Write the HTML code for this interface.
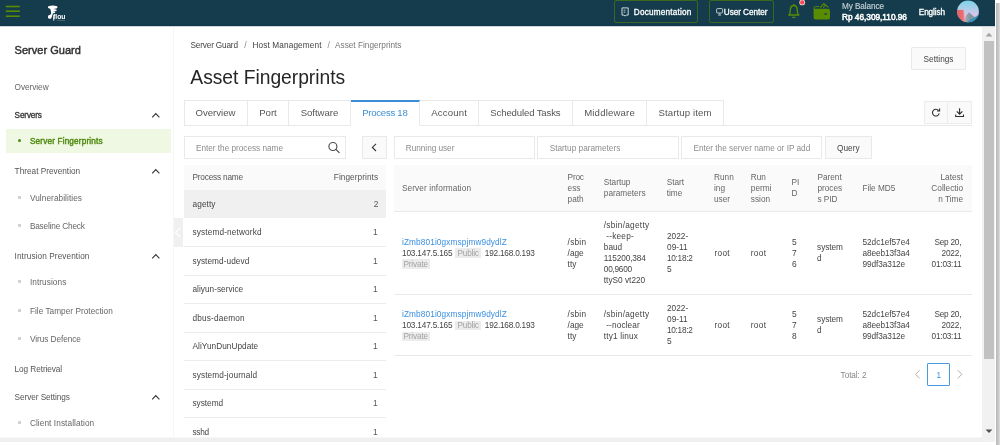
<!DOCTYPE html>
<html><head><meta charset="utf-8"><title>Asset Fingerprints</title>
<style>
*{box-sizing:border-box;margin:0;padding:0}
html,body{width:1000px;height:445px;overflow:hidden;background:#fff}
body{font-family:"Liberation Sans",sans-serif;font-size:8.2px;color:#333;position:relative;will-change:transform}
.a{position:absolute;white-space:nowrap}
#hdr{left:0;top:0;width:995px;height:27px;background:linear-gradient(#143c4c 0,#143c4c 24px,#113848 25px,#113848 26px);border-bottom:1px solid #cdd6d9}
.hbtn{top:0;height:23px;border:1px solid #3b6820;border-radius:2px}
.tab{top:100px;height:26px;border:1px solid #e9e9e9;border-left:none;background:#fff}
.inp{top:136px;height:23px;border:1px solid #e9e9e9;background:#fff}
.tag{background:#ececec;color:#999;padding:0 1.3px}
</style></head><body>
<div class="a" id="hdr"></div>
<svg class="a" style="left:0;top:0" width="995" height="27" viewBox="0 0 995 27">
<rect x="5.8" y="5.7" width="14" height="1.6" fill="#5a8c00"/><rect x="5.8" y="10.4" width="14" height="1.6" fill="#5a8c00"/><rect x="5.8" y="15.4" width="14" height="1.6" fill="#5a8c00"/>
<ellipse cx="52.7" cy="7.3" rx="4.8" ry="1.7" fill="#fff"/>
<ellipse cx="53.9" cy="10.3" rx="3" ry="1.1" fill="#fff"/>
<ellipse cx="53.2" cy="12.3" rx="2.1" ry="0.9" fill="#fff"/>
<path d="M50 8 C50.4 10 51.4 11.6 51.2 13.2 C51 14.6 49.6 15 48.6 15.8 L51.2 17.4 C52.2 16.4 52.6 14.6 53 12.8 L54.6 8.4 Z" fill="#fff"/>
<circle cx="49.8" cy="16.9" r="1.9" fill="#fff"/>
<rect x="53.3" y="16" width="1" height="4.6" fill="#fff"/>
<text x="53" y="19" font-family="Liberation Sans, sans-serif" font-weight="bold" font-size="6.6" fill="#fff" textLength="12.4" lengthAdjust="spacingAndGlyphs">flou</text>
<rect x="57" y="19.9" width="8" height="0.8" fill="#54737f"/>
<path d="M622 7.9 H628.2 V15.1 H626.3 L625.1 16 L623.9 15.1 H622 Z" fill="none" stroke="#e4eaec" stroke-width="0.9" stroke-linejoin="round"/>
<path d="M623.6 10.2 H625.4 M623.6 12.2 H625.4" stroke="#e4eaec" stroke-width="0.8"/>
<rect x="716.6" y="8.6" width="6" height="4.4" rx="0.9" fill="none" stroke="#e4eaec" stroke-width="0.8"/>
<path d="M718.5 15.3 L719.6 13.4 L720.7 15.3Z" fill="none" stroke="#e4eaec" stroke-width="0.6"/>
<g fill="none" stroke="#5a8c00">
<path d="M793.8 5.5 C790.6 5.5 790.4 8.2 790.4 9.8 C790.4 12.6 790.2 13.8 788.8 15 H798.8 C797.4 13.8 797.2 12.6 797.2 9.8 C797.2 8.2 797 5.5 793.8 5.5 Z" stroke-width="1.4" stroke-linejoin="round"/>
<path d="M793.8 5.4 V4.4" stroke-width="1.3" stroke-linecap="round"/>
<path d="M792.8 17.4 H794.8" stroke-width="1.4" stroke-linecap="round"/>
<path d="M820.2 7.6 L823.8 3.7 L828.4 7.4" stroke-width="1.2" stroke-linejoin="round"/>
<path d="M823.2 7.6 L825.6 5" stroke-width="1.1"/>
<path d="M819 6.6 H815.4 Q814.1 6.6 814.1 8 V9.4" stroke-width="1"/>
</g>
<path d="M813.6 8.7 H828 Q830 8.7 830 10.7 V17.6 Q830 19.6 828 19.6 H815.6 Q813.6 19.6 813.6 17.6 Z" fill="#5a8c00"/>
<rect x="824.3" y="13.2" width="2.8" height="1.6" rx="0.3" fill="#1d4a45"/>
<circle cx="802.2" cy="2.4" r="2.9" fill="#e9d3d8"/><circle cx="802.2" cy="2.4" r="2.1" fill="#ff4655"/>
</svg>
<div class="a hbtn" style="left:614px;width:84px"></div>
<div class="a" style="left:633.8px;top:9px;font-size:8.2px;line-height:1;color:#fff;-webkit-text-stroke:0.3px #fff;letter-spacing:0.204px;">Documentation</div>
<div class="a hbtn" style="left:709px;width:65px"></div>
<div class="a" style="left:723.8px;top:9px;font-size:8.2px;line-height:1;color:#fff;-webkit-text-stroke:0.3px #fff;letter-spacing:-0.050px;">User Center</div>
<div class="a" style="left:842px;top:3px;font-size:8.2px;line-height:1;color:#c4d0d6;-webkit-text-stroke:0.15px #c4d0d6;letter-spacing:-0.094px;">My Balance</div>
<div class="a" style="left:842px;top:13px;font-size:8.3px;line-height:1;color:#fff;-webkit-text-stroke:0.5px #fff;letter-spacing:-0.025px;">Rp 46,309,110.96</div>
<div class="a" style="left:918.8px;top:9px;font-size:8.2px;line-height:1;color:#fff;-webkit-text-stroke:0.3px #fff;letter-spacing:-0.116px;">English</div>
<svg class="a" style="left:956px;top:0px" width="24" height="24" viewBox="956 0 24 24"><defs><clipPath id="av"><circle cx="968" cy="11.4" r="10.9"/></clipPath><linearGradient id="sky" x1="0" y1="0" x2="0" y2="1"><stop offset="0" stop-color="#78d4ea"/><stop offset="0.4" stop-color="#b3cdea"/><stop offset="0.75" stop-color="#eec0e8"/><stop offset="1" stop-color="#e6bfe2"/></linearGradient>
<linearGradient id="clf" x1="0" y1="0" x2="1" y2="0"><stop offset="0" stop-color="#e05a62"/><stop offset="0.7" stop-color="#ea6e72"/><stop offset="1" stop-color="#f49a98"/></linearGradient>
<linearGradient id="mtn" x1="0" y1="0" x2="1" y2="0"><stop offset="0" stop-color="#9fb0ba"/><stop offset="0.5" stop-color="#7f929e"/><stop offset="1" stop-color="#93a5b0"/></linearGradient></defs>
<g clip-path="url(#av)"><rect x="956" y="0" width="24" height="24" fill="url(#sky)"/>
<path d="M964.4 23 L965.8 16 L969 12.2 L971.4 14.6 L974.2 16.4 L977 23Z" fill="url(#mtn)"/>
<path d="M956 10 L963.4 9.7 L964.2 13 L965.2 23 L956 23Z" fill="url(#clf)"/>
<path d="M965.6 23 L979.5 14.2 L980 23Z" fill="#2d93b8"/></g></svg>
<div class="a" style="left:173px;top:27px;width:1px;height:410px;background:#f6f6f6"></div>
<div class="a" style="left:14.6px;top:45px;font-size:11px;line-height:1;color:#333;-webkit-text-stroke:0.45px #333;letter-spacing:0.025px;">Server Guard</div>
<div class="a" style="left:14.6px;top:84px;font-size:8.25px;line-height:1;color:#666;letter-spacing:-0.055px;">Overview</div>
<div class="a" style="left:14.6px;top:112px;font-size:8.2px;line-height:1;color:#333;-webkit-text-stroke:0.3px #333;letter-spacing:-0.142px;">Servers</div>
<svg class="a" style="left:150px;top:110.8px" width="12" height="9" viewBox="0 0 12 9"><path d="M2.2 6.3 L5.8 2.6 L9.4 6.3" fill="none" stroke="#333" stroke-width="1.1"/></svg>
<div class="a" style="left:6px;top:129px;width:165px;height:24px;background:#eff8e2"></div>
<div class="a" style="left:18.3px;top:139.4px;width:3px;height:3px;border-radius:50%;background:#4f8a10"></div>
<div class="a" style="left:29.9px;top:138px;font-size:8.2px;line-height:1;color:#4f8a10;-webkit-text-stroke:0.4px #4f8a10;letter-spacing:0.171px;">Server Fingerprints</div>
<div class="a" style="left:14.6px;top:168px;font-size:8.25px;line-height:1;color:#555;">Threat Prevention</div>
<svg class="a" style="left:150px;top:167.2px" width="12" height="9" viewBox="0 0 12 9"><path d="M2.2 6.3 L5.8 2.6 L9.4 6.3" fill="none" stroke="#333" stroke-width="1.1"/></svg>
<div class="a" style="left:18px;top:196px;width:3px;height:3px;background:#d2d2d2"></div>
<div class="a" style="left:29.9px;top:195px;font-size:8.25px;line-height:1;color:#666;letter-spacing:0.075px;">Vulnerabilities</div>
<div class="a" style="left:18px;top:224px;width:3px;height:3px;background:#d2d2d2"></div>
<div class="a" style="left:29.9px;top:223px;font-size:8.25px;line-height:1;color:#666;letter-spacing:-0.179px;">Baseline Check</div>
<div class="a" style="left:14.6px;top:253px;font-size:8.25px;line-height:1;color:#555;letter-spacing:0.075px;">Intrusion Prevention</div>
<svg class="a" style="left:150px;top:251.7px" width="12" height="9" viewBox="0 0 12 9"><path d="M2.2 6.3 L5.8 2.6 L9.4 6.3" fill="none" stroke="#333" stroke-width="1.1"/></svg>
<div class="a" style="left:18px;top:280px;width:3px;height:3px;background:#d2d2d2"></div>
<div class="a" style="left:29.9px;top:279px;font-size:8.25px;line-height:1;color:#666;letter-spacing:0.070px;">Intrusions</div>
<div class="a" style="left:18px;top:309px;width:3px;height:3px;background:#d2d2d2"></div>
<div class="a" style="left:29.9px;top:308px;font-size:8.25px;line-height:1;color:#666;letter-spacing:0.025px;">File Tamper Protection</div>
<div class="a" style="left:18px;top:337px;width:3px;height:3px;background:#d2d2d2"></div>
<div class="a" style="left:29.9px;top:336px;font-size:8.25px;line-height:1;color:#666;letter-spacing:-0.056px;">Virus Defence</div>
<div class="a" style="left:14.6px;top:366px;font-size:8.25px;line-height:1;color:#555;letter-spacing:-0.084px;">Log Retrieval</div>
<div class="a" style="left:14.6px;top:394px;font-size:8.25px;line-height:1;color:#555;letter-spacing:-0.079px;">Server Settings</div>
<svg class="a" style="left:150px;top:392.9px" width="12" height="9" viewBox="0 0 12 9"><path d="M2.2 6.3 L5.8 2.6 L9.4 6.3" fill="none" stroke="#333" stroke-width="1.1"/></svg>
<div class="a" style="left:18px;top:421px;width:3px;height:3px;background:#d2d2d2"></div>
<div class="a" style="left:29.9px;top:420px;font-size:8.25px;line-height:1;color:#666;letter-spacing:0.082px;">Client Installation</div>
<div class="a" style="left:190.5px;top:42px;font-size:8.25px;line-height:1;color:#444;letter-spacing:-0.184px;">Server Guard</div>
<div class="a" style="left:244.2px;top:41px;font-size:8.6px;line-height:1;color:#8a8a8a;">/</div>
<div class="a" style="left:252.5px;top:42px;font-size:8.25px;line-height:1;color:#444;letter-spacing:0.114px;">Host Management</div>
<div class="a" style="left:327.6px;top:41px;font-size:8.6px;line-height:1;color:#8a8a8a;">/</div>
<div class="a" style="left:335px;top:42px;font-size:8.25px;line-height:1;color:#777;">Asset Fingerprints</div>
<div class="a" style="left:190.3px;top:68px;font-size:19.3px;line-height:1;color:#262626;letter-spacing:-0.031px;">Asset Fingerprints</div>
<div class="a" style="left:911px;top:47px;width:55px;height:23px;border:1px solid #e9e9e9;border-radius:1px;background:#fafafa"></div>
<div class="a" style="left:923.5px;top:56px;font-size:8.25px;line-height:1;color:#444;letter-spacing:0.027px;">Settings</div>
<div class="a" style="left:184px;top:125px;width:788px;height:1px;background:#e9e9e9"></div>
<div class="a tab" style="left:184px;width:64px;border-left:1px solid #e9e9e9;"></div>
<div class="a" style="left:195.5px;top:108px;font-size:9.6px;line-height:1;color:#555;">Overview</div>
<div class="a tab" style="left:248px;width:41px;"></div>
<div class="a" style="left:259.25px;top:108px;font-size:9.6px;line-height:1;color:#555;letter-spacing:-0.036px;">Port</div>
<div class="a tab" style="left:289px;width:62px;"></div>
<div class="a" style="left:300.75px;top:108px;font-size:9.6px;line-height:1;color:#555;letter-spacing:-0.055px;">Software</div>
<div class="a tab" style="left:351px;width:69px;border-top:2px solid #3c8fd6;border-bottom-color:#fff;"></div>
<div class="a" style="left:362.25px;top:108px;font-size:9.6px;line-height:1;color:#3c8fd6;letter-spacing:-0.280px;">Process 18</div>
<div class="a tab" style="left:420px;width:59px;"></div>
<div class="a" style="left:431.15px;top:108px;font-size:9.6px;line-height:1;color:#555;letter-spacing:0.169px;">Account</div>
<div class="a tab" style="left:479px;width:94px;"></div>
<div class="a" style="left:490.3px;top:108px;font-size:9.6px;line-height:1;color:#555;letter-spacing:-0.143px;">Scheduled Tasks</div>
<div class="a tab" style="left:573px;width:74px;"></div>
<div class="a" style="left:584.15px;top:108px;font-size:9.6px;line-height:1;color:#555;letter-spacing:0.179px;">Middleware</div>
<div class="a tab" style="left:647px;width:77px;"></div>
<div class="a" style="left:658.45px;top:108px;font-size:9.6px;line-height:1;color:#555;letter-spacing:0.122px;">Startup item</div>
<div class="a" style="left:924px;top:101px;width:48px;height:23px;border:1px solid #ececec;background:#fafafa"></div>
<div class="a" style="left:947px;top:101px;width:1px;height:23px;background:#ececec"></div>
<svg class="a" style="left:924px;top:101px" width="48" height="23" viewBox="924 101 48 23"><g fill="none" stroke="#2e2e2e" stroke-width="1.1">
<path d="M938.6 110.6 A3.4 3.4 0 1 0 939.2 113.4"/><path d="M939.6 108.4 V111 H937"/>
<path d="M959.6 108.2 V114 M956.8 111.4 L959.6 114.2 L962.4 111.4 M955.7 114.4 V116.5 H963.5 V114.4"/></g></svg>
<div class="a inp" style="left:184px;width:162px"></div>
<div class="a" style="left:196px;top:145px;font-size:8.25px;line-height:1;color:#8c8c8c;letter-spacing:-0.028px;">Enter the process name</div>
<svg class="a" style="left:327px;top:141px" width="14" height="13" viewBox="0 0 14 13"><circle cx="5.9" cy="5.5" r="4" fill="none" stroke="#4a4a4a" stroke-width="1.15"/><path d="M8.8 8.4 L12.5 11.9" stroke="#4a4a4a" stroke-width="1.3"/></svg>
<div class="a" style="left:362px;top:136px;width:25px;height:23px;border:1px solid #e9e9e9;background:#fafafa"></div>
<svg class="a" style="left:370px;top:143px" width="8" height="9" viewBox="0 0 8 9"><path d="M6 0.8 L2.4 4.4 L6 8" fill="none" stroke="#333" stroke-width="1.1"/></svg>
<div class="a inp" style="left:394px;width:141px"></div>
<div class="a" style="left:405.8px;top:145px;font-size:8.25px;line-height:1;color:#8c8c8c;letter-spacing:-0.043px;">Running user</div>
<div class="a inp" style="left:537px;width:142px"></div>
<div class="a" style="left:549.7px;top:145px;font-size:8.25px;line-height:1;color:#8c8c8c;">Startup parameters</div>
<div class="a inp" style="left:681px;width:141px"></div>
<div class="a" style="left:693.4px;top:145px;font-size:8.25px;line-height:1;color:#8c8c8c;letter-spacing:-0.012px;">Enter the server name or IP add</div>
<div class="a" style="left:825px;top:136px;width:47px;height:23px;border:1px solid #e9e9e9;background:#fafafa"></div>
<div class="a" style="left:837.1px;top:145px;font-size:8.25px;line-height:1;color:#444;">Query</div>
<div class="a" style="left:184px;top:165px;width:202px;height:24.5px;background:#fafafa"></div>
<div class="a" style="left:192.5px;top:174px;font-size:8.25px;line-height:1;color:#555;letter-spacing:-0.194px;">Process name</div>
<div class="a" style="right:621.83px;top:174px;font-size:8.25px;line-height:1;color:#555;letter-spacing:0.067px;">Fingerprints</div>
<div class="a" style="left:184px;top:189.5px;width:202px;height:28.5px;background:#f0f0f0"></div>
<div class="a" style="left:192.5px;top:201px;font-size:8.25px;line-height:1;color:#444;letter-spacing:0.105px;">agetty</div>
<div class="a" style="right:621.7px;top:200px;font-size:8.4px;line-height:1;color:#555;">2</div>
<div class="a" style="left:192.5px;top:229px;font-size:8.25px;line-height:1;color:#444;letter-spacing:0.137px;">systemd-networkd</div>
<div class="a" style="right:622.4px;top:228px;font-size:8.4px;line-height:1;color:#555;">1</div>
<div class="a" style="left:184px;top:246.0px;width:202px;height:1px;background:#ececec"></div>
<div class="a" style="left:192.5px;top:258px;font-size:8.25px;line-height:1;color:#444;letter-spacing:0.072px;">systemd-udevd</div>
<div class="a" style="right:622.4px;top:257px;font-size:8.4px;line-height:1;color:#555;">1</div>
<div class="a" style="left:184px;top:274.5px;width:202px;height:1px;background:#ececec"></div>
<div class="a" style="left:192.5px;top:286px;font-size:8.25px;line-height:1;color:#444;letter-spacing:0.013px;">aliyun-service</div>
<div class="a" style="right:622.4px;top:285px;font-size:8.4px;line-height:1;color:#555;">1</div>
<div class="a" style="left:184px;top:303.0px;width:202px;height:1px;background:#ececec"></div>
<div class="a" style="left:192.5px;top:315px;font-size:8.25px;line-height:1;color:#444;letter-spacing:0.175px;">dbus-daemon</div>
<div class="a" style="right:622.4px;top:314px;font-size:8.4px;line-height:1;color:#555;">1</div>
<div class="a" style="left:184px;top:331.5px;width:202px;height:1px;background:#ececec"></div>
<div class="a" style="left:192.5px;top:343px;font-size:8.25px;line-height:1;color:#444;letter-spacing:0.041px;">AliYunDunUpdate</div>
<div class="a" style="right:622.4px;top:342px;font-size:8.4px;line-height:1;color:#555;">1</div>
<div class="a" style="left:184px;top:360.0px;width:202px;height:1px;background:#ececec"></div>
<div class="a" style="left:192.5px;top:372px;font-size:8.25px;line-height:1;color:#444;letter-spacing:0.112px;">systemd-journald</div>
<div class="a" style="right:622.4px;top:371px;font-size:8.4px;line-height:1;color:#555;">1</div>
<div class="a" style="left:184px;top:388.5px;width:202px;height:1px;background:#ececec"></div>
<div class="a" style="left:192.5px;top:400px;font-size:8.25px;line-height:1;color:#444;letter-spacing:-0.020px;">systemd</div>
<div class="a" style="right:622.4px;top:399px;font-size:8.4px;line-height:1;color:#555;">1</div>
<div class="a" style="left:184px;top:417.0px;width:202px;height:1px;background:#ececec"></div>
<div class="a" style="left:192.5px;top:429px;font-size:8.25px;line-height:1;color:#444;letter-spacing:-0.309px;">sshd</div>
<div class="a" style="right:622.4px;top:428px;font-size:8.4px;line-height:1;color:#555;">1</div>
<div class="a" style="left:173.5px;top:217.5px;width:9px;height:29.5px;background:#f0f0f0"></div>
<svg class="a" style="left:174px;top:227px" width="8" height="11" viewBox="0 0 8 11"><path d="M6.2 0.8 L1.4 5.4 L6.2 10" fill="none" stroke="#fff" stroke-width="1.1"/></svg>
<div class="a" style="left:394px;top:165px;width:578px;height:47px;background:#fafafa;border-bottom:1px solid #e9e9e9"></div>
<div class="a" style="left:402px;top:185px;font-size:8.25px;line-height:1;color:#666;letter-spacing:0.094px;">Server information</div>
<div class="a" style="left:567.6px;top:174px;font-size:8.25px;line-height:1;color:#666;letter-spacing:-0.221px;">Proc</div>
<div class="a" style="left:567.6px;top:185px;font-size:8.25px;line-height:1;color:#666;">ess</div>
<div class="a" style="left:567.6px;top:196px;font-size:8.25px;line-height:1;color:#666;">path</div>
<div class="a" style="left:603.8px;top:179px;font-size:8.25px;line-height:1;color:#666;">Startup</div>
<div class="a" style="left:603.8px;top:190px;font-size:8.25px;line-height:1;color:#666;">parameters</div>
<div class="a" style="left:666.7px;top:179px;font-size:8.25px;line-height:1;color:#666;">Start</div>
<div class="a" style="left:666.7px;top:190px;font-size:8.25px;line-height:1;color:#666;">time</div>
<div class="a" style="left:714px;top:174px;font-size:8.25px;line-height:1;color:#666;">Runn</div>
<div class="a" style="left:714px;top:185px;font-size:8.25px;line-height:1;color:#666;">ing</div>
<div class="a" style="left:714px;top:196px;font-size:8.25px;line-height:1;color:#666;">user</div>
<div class="a" style="left:750.8px;top:174px;font-size:8.25px;line-height:1;color:#666;">Run</div>
<div class="a" style="left:750.8px;top:185px;font-size:8.25px;line-height:1;color:#666;">permi</div>
<div class="a" style="left:750.8px;top:196px;font-size:8.25px;line-height:1;color:#666;">ssion</div>
<div class="a" style="left:791.6px;top:179px;font-size:8.25px;line-height:1;color:#666;">PI</div>
<div class="a" style="left:791.6px;top:190px;font-size:8.25px;line-height:1;color:#666;">D</div>
<div class="a" style="left:817.4px;top:174px;font-size:8.25px;line-height:1;color:#666;">Parent</div>
<div class="a" style="left:817.4px;top:185px;font-size:8.25px;line-height:1;color:#666;">proces</div>
<div class="a" style="left:817.4px;top:196px;font-size:8.25px;line-height:1;color:#666;">s PID</div>
<div class="a" style="left:862.4px;top:185px;font-size:8.25px;line-height:1;color:#666;">File MD5</div>
<div class="a" style="right:37px;top:174px;font-size:8.25px;line-height:1;color:#666;">Latest</div>
<div class="a" style="right:37px;top:185px;font-size:8.25px;line-height:1;color:#666;">Collectio</div>
<div class="a" style="right:37px;top:196px;font-size:8.25px;line-height:1;color:#666;">n Time</div>
<div class="a" style="left:402px;top:239px;font-size:8.25px;line-height:1;color:#3a8fe0;letter-spacing:0.116px;">iZmb801i0gxmspjmw9dydlZ</div>
<div class="a" style="left:402px;top:250px;font-size:8.25px;line-height:1;color:#444;letter-spacing:-0.180px;">103.147.5.165</div>
<div class="a" style="left:455.4px;top:248.39999999999998px;width:25.4px;height:9.6px;background:#ececec"></div>
<div class="a" style="left:457.4px;top:250px;font-size:8.25px;line-height:1;color:#a3a3a3;letter-spacing:-0.174px;">Public</div>
<div class="a" style="left:484.8px;top:250px;font-size:8.25px;line-height:1;color:#444;letter-spacing:-0.222px;">192.168.0.193</div>
<div class="a" style="left:402px;top:259.45px;width:27.6px;height:9.6px;background:#ececec"></div>
<div class="a" style="left:403.4px;top:261px;font-size:8.25px;line-height:1;color:#a3a3a3;letter-spacing:-0.146px;">Private</div>
<div class="a" style="left:567.6px;top:239px;font-size:8.25px;line-height:1;color:#444;letter-spacing:0.243px;">/sbin</div>
<div class="a" style="left:567.6px;top:250px;font-size:8.25px;line-height:1;color:#444;">/age</div>
<div class="a" style="left:567.6px;top:261px;font-size:8.25px;line-height:1;color:#444;">tty</div>
<div class="a" style="left:603.8px;top:222px;font-size:8.25px;line-height:1;color:#444;letter-spacing:0.282px;">/sbin/agetty</div>
<div class="a" style="left:603.8px;top:233px;font-size:8.25px;line-height:1;color:#444;letter-spacing:0.211px;">&nbsp;--keep-</div>
<div class="a" style="left:603.8px;top:244px;font-size:8.25px;line-height:1;color:#444;letter-spacing:0.015px;">baud</div>
<div class="a" style="left:603.8px;top:255px;font-size:8.25px;line-height:1;color:#444;letter-spacing:-0.097px;">115200,384</div>
<div class="a" style="left:603.8px;top:266px;font-size:8.25px;line-height:1;color:#444;letter-spacing:-0.254px;">00,9600</div>
<div class="a" style="left:603.8px;top:277px;font-size:8.25px;line-height:1;color:#444;letter-spacing:0.013px;">ttyS0 vt220</div>
<div class="a" style="left:667px;top:233px;font-size:8.25px;line-height:1;color:#444;letter-spacing:0.025px;">2022-</div>
<div class="a" style="left:667px;top:244px;font-size:8.25px;line-height:1;color:#444;letter-spacing:0.053px;">09-11</div>
<div class="a" style="left:667px;top:255px;font-size:8.25px;line-height:1;color:#444;letter-spacing:-0.288px;">10:18:2</div>
<div class="a" style="left:667px;top:265px;font-size:8.4px;line-height:1;color:#444;">5</div>
<div class="a" style="left:714.4px;top:250px;font-size:8.25px;line-height:1;color:#444;letter-spacing:0.328px;">root</div>
<div class="a" style="left:750.8px;top:250px;font-size:8.25px;line-height:1;color:#444;letter-spacing:0.328px;">root</div>
<div class="a" style="left:791.9px;top:238px;font-size:8.4px;line-height:1;color:#444;">5</div>
<div class="a" style="left:791.9px;top:249px;font-size:8.4px;line-height:1;color:#444;">7</div>
<div class="a" style="left:791.9px;top:260px;font-size:8.4px;line-height:1;color:#444;">6</div>
<div class="a" style="left:817.1px;top:244px;font-size:8.25px;line-height:1;color:#444;letter-spacing:-0.066px;">system</div>
<div class="a" style="left:817.1px;top:255px;font-size:8.25px;line-height:1;color:#444;">d</div>
<div class="a" style="left:862.5px;top:239px;font-size:8.25px;line-height:1;color:#444;letter-spacing:-0.041px;">52dc1ef57e4</div>
<div class="a" style="left:862.5px;top:250px;font-size:8.25px;line-height:1;color:#444;letter-spacing:-0.087px;">a8eeb13f3a4</div>
<div class="a" style="left:862.5px;top:261px;font-size:8.25px;line-height:1;color:#444;letter-spacing:-0.099px;">99df3a312e</div>
<div class="a" style="right:38.72px;top:239px;font-size:8.25px;line-height:1;color:#444;letter-spacing:-0.223px;">Sep 20,</div>
<div class="a" style="right:38.66px;top:250px;font-size:8.25px;line-height:1;color:#444;letter-spacing:-0.161px;">2022,</div>
<div class="a" style="right:38.73px;top:261px;font-size:8.25px;line-height:1;color:#444;letter-spacing:-0.229px;">01:03:11</div>
<div class="a" style="left:394px;top:294px;width:578px;height:1px;background:#e9e9e9"></div>
<div class="a" style="left:402px;top:311px;font-size:8.25px;line-height:1;color:#3a8fe0;letter-spacing:0.116px;">iZmb801i0gxmspjmw9dydlZ</div>
<div class="a" style="left:402px;top:322px;font-size:8.25px;line-height:1;color:#444;letter-spacing:-0.180px;">103.147.5.165</div>
<div class="a" style="left:455.4px;top:320.5px;width:25.4px;height:9.6px;background:#ececec"></div>
<div class="a" style="left:457.4px;top:322px;font-size:8.25px;line-height:1;color:#a3a3a3;letter-spacing:-0.174px;">Public</div>
<div class="a" style="left:484.8px;top:322px;font-size:8.25px;line-height:1;color:#444;letter-spacing:-0.222px;">192.168.0.193</div>
<div class="a" style="left:402px;top:331.55px;width:27.6px;height:9.6px;background:#ececec"></div>
<div class="a" style="left:403.4px;top:333px;font-size:8.25px;line-height:1;color:#a3a3a3;letter-spacing:-0.146px;">Private</div>
<div class="a" style="left:567.6px;top:311px;font-size:8.25px;line-height:1;color:#444;letter-spacing:0.243px;">/sbin</div>
<div class="a" style="left:567.6px;top:322px;font-size:8.25px;line-height:1;color:#444;">/age</div>
<div class="a" style="left:567.6px;top:333px;font-size:8.25px;line-height:1;color:#444;">tty</div>
<div class="a" style="left:603.8px;top:311px;font-size:8.25px;line-height:1;color:#444;letter-spacing:0.282px;">/sbin/agetty</div>
<div class="a" style="left:603.8px;top:322px;font-size:8.25px;line-height:1;color:#444;letter-spacing:0.128px;">&nbsp;--noclear</div>
<div class="a" style="left:603.8px;top:333px;font-size:8.25px;line-height:1;color:#444;letter-spacing:0.160px;">tty1 linux</div>
<div class="a" style="left:667px;top:305px;font-size:8.25px;line-height:1;color:#444;letter-spacing:0.025px;">2022-</div>
<div class="a" style="left:667px;top:316px;font-size:8.25px;line-height:1;color:#444;letter-spacing:0.053px;">09-11</div>
<div class="a" style="left:667px;top:327px;font-size:8.25px;line-height:1;color:#444;letter-spacing:-0.288px;">10:18:2</div>
<div class="a" style="left:667px;top:337px;font-size:8.4px;line-height:1;color:#444;">5</div>
<div class="a" style="left:714.4px;top:322px;font-size:8.25px;line-height:1;color:#444;letter-spacing:0.328px;">root</div>
<div class="a" style="left:750.8px;top:322px;font-size:8.25px;line-height:1;color:#444;letter-spacing:0.328px;">root</div>
<div class="a" style="left:791.9px;top:310px;font-size:8.4px;line-height:1;color:#444;">5</div>
<div class="a" style="left:791.9px;top:321px;font-size:8.4px;line-height:1;color:#444;">7</div>
<div class="a" style="left:791.9px;top:332px;font-size:8.4px;line-height:1;color:#444;">8</div>
<div class="a" style="left:817.1px;top:316px;font-size:8.25px;line-height:1;color:#444;letter-spacing:-0.066px;">system</div>
<div class="a" style="left:817.1px;top:327px;font-size:8.25px;line-height:1;color:#444;">d</div>
<div class="a" style="left:862.5px;top:311px;font-size:8.25px;line-height:1;color:#444;letter-spacing:-0.041px;">52dc1ef57e4</div>
<div class="a" style="left:862.5px;top:322px;font-size:8.25px;line-height:1;color:#444;letter-spacing:-0.087px;">a8eeb13f3a4</div>
<div class="a" style="left:862.5px;top:333px;font-size:8.25px;line-height:1;color:#444;letter-spacing:-0.099px;">99df3a312e</div>
<div class="a" style="right:38.72px;top:311px;font-size:8.25px;line-height:1;color:#444;letter-spacing:-0.223px;">Sep 20,</div>
<div class="a" style="right:38.66px;top:322px;font-size:8.25px;line-height:1;color:#444;letter-spacing:-0.161px;">2022,</div>
<div class="a" style="right:38.73px;top:333px;font-size:8.25px;line-height:1;color:#444;letter-spacing:-0.229px;">01:03:11</div>
<div class="a" style="left:394px;top:355px;width:578px;height:1px;background:#e9e9e9"></div>
<div class="a" style="left:840.6px;top:372px;font-size:8.25px;line-height:1;color:#888;letter-spacing:-0.086px;">Total: 2</div>
<svg class="a" style="left:913px;top:369px" width="9" height="11" viewBox="0 0 9 11"><path d="M6.6 1.2 L2.6 5.3 L6.6 9.4" fill="none" stroke="#b0b0b0" stroke-width="1"/></svg>
<div class="a" style="left:927px;top:363px;width:23px;height:23px;border:1px solid #4a9ae0;border-radius:1px"></div>
<div class="a" style="left:936.4px;top:372px;font-size:8.2px;line-height:1;color:#3c8fd6;">1</div>
<svg class="a" style="left:955px;top:369px" width="9" height="11" viewBox="0 0 9 11"><path d="M2.8 1.2 L6.8 5.3 L2.8 9.4" fill="none" stroke="#b0b0b0" stroke-width="1"/></svg>
<div class="a" style="left:982px;top:27px;width:13px;height:415px;background:#f1f1f1"></div>
<div class="a" style="left:983.5px;top:41px;width:10.3px;height:318px;background:#c1c1c1"></div>
<svg class="a" style="left:985px;top:32px" width="8" height="5" viewBox="0 0 8 5"><path d="M0.6 4.4 L4 0.8 L7.4 4.4Z" fill="#a3a3a3"/></svg>
<svg class="a" style="left:985px;top:428.5px" width="8" height="5" viewBox="0 0 8 5"><path d="M0.6 0.5 L4 4.1 L7.4 0.5Z" fill="#505050"/></svg>
<div class="a" style="left:0;top:437px;width:982px;height:5px;background:linear-gradient(#f7f7f7 0,#f7f7f7 20%,#efefef 20%,#efefef 100%)"></div>
<div class="a" style="left:995px;top:0;width:5px;height:445px;background:#fff"></div>
<div class="a" style="left:996.4px;top:3px;width:3.6px;height:442px;background:linear-gradient(90deg,#b9b9b9,#c4c4c4 50%,#dedede)"></div>
</body></html>
